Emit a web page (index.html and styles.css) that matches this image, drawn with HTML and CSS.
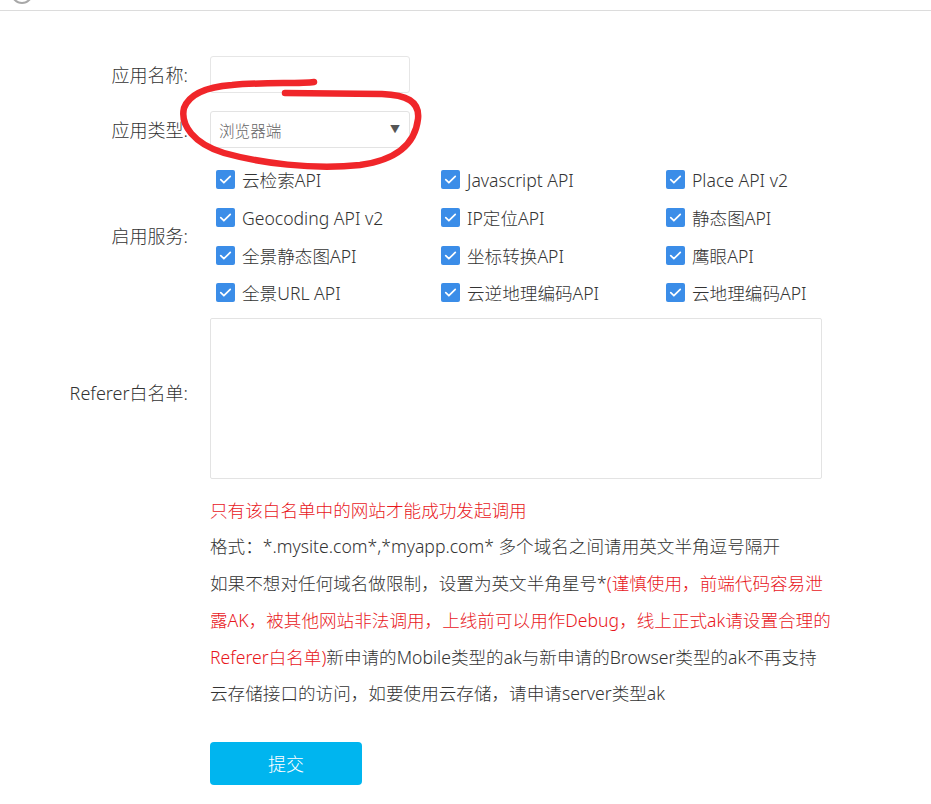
FILE: index.html
```html
<!DOCTYPE html>
<html lang="zh-CN">
<head>
<meta charset="utf-8">
<title>创建应用</title>
<link rel="stylesheet" href="styles.css">
</head>
<body>
<div class="topbar"><span class="logo-circle"></span></div>
<form class="app-form">
  <div class="row row-name">
    <label class="label">应用名称:</label>
    <div class="control"><input class="text-input" type="text"></div>
  </div>
  <div class="row row-type">
    <label class="label">应用类型:</label>
    <div class="control">
      <div class="select"><span>浏览器端</span><span class="arrow">▼</span></div>
    </div>
  </div>
  <div class="row row-services">
    <label class="label">启用服务:</label>
    <div class="control services">
      <div class="cb"><span class="box"><svg viewBox="0 0 20 20"><path d="M5 10.2l3.3 3.2L15 6.8"/></svg></span>云检索API</div>
      <div class="cb"><span class="box"><svg viewBox="0 0 20 20"><path d="M5 10.2l3.3 3.2L15 6.8"/></svg></span>Javascript API</div>
      <div class="cb"><span class="box"><svg viewBox="0 0 20 20"><path d="M5 10.2l3.3 3.2L15 6.8"/></svg></span>Place API v2</div>
      <div class="cb"><span class="box"><svg viewBox="0 0 20 20"><path d="M5 10.2l3.3 3.2L15 6.8"/></svg></span>Geocoding API v2</div>
      <div class="cb"><span class="box"><svg viewBox="0 0 20 20"><path d="M5 10.2l3.3 3.2L15 6.8"/></svg></span>IP定位API</div>
      <div class="cb"><span class="box"><svg viewBox="0 0 20 20"><path d="M5 10.2l3.3 3.2L15 6.8"/></svg></span>静态图API</div>
      <div class="cb"><span class="box"><svg viewBox="0 0 20 20"><path d="M5 10.2l3.3 3.2L15 6.8"/></svg></span>全景静态图API</div>
      <div class="cb"><span class="box"><svg viewBox="0 0 20 20"><path d="M5 10.2l3.3 3.2L15 6.8"/></svg></span>坐标转换API</div>
      <div class="cb"><span class="box"><svg viewBox="0 0 20 20"><path d="M5 10.2l3.3 3.2L15 6.8"/></svg></span>鹰眼API</div>
      <div class="cb"><span class="box"><svg viewBox="0 0 20 20"><path d="M5 10.2l3.3 3.2L15 6.8"/></svg></span>全景URL API</div>
      <div class="cb"><span class="box"><svg viewBox="0 0 20 20"><path d="M5 10.2l3.3 3.2L15 6.8"/></svg></span>云逆地理编码API</div>
      <div class="cb"><span class="box"><svg viewBox="0 0 20 20"><path d="M5 10.2l3.3 3.2L15 6.8"/></svg></span>云地理编码API</div>
    </div>
  </div>
  <div class="row row-referer">
    <label class="label">Referer白名单:</label>
    <div class="control"><textarea class="textarea"></textarea></div>
  </div>
  <div class="row row-help">
    <div></div>
    <div class="help">
      <div class="red">只有该白名单中的网站才能成功发起调用</div>
      <div>格式：*.mysite.com*,*myapp.com* 多个域名之间请用英文半角逗号隔开</div>
      <div>如果不想对任何域名做限制，设置为英文半角星号*<span class="red">(谨慎使用，前端代码容易泄<br>露AK，被其他网站非法调用，上线前可以用作Debug，线上正式ak请设置合理的<br>Referer白名单)</span>新申请的Mobile类型的ak与新申请的Browser类型的ak不再支持<br>云存储接口的访问，如要使用云存储，请申请server类型ak</div>
    </div>
  </div>
  <div class="row row-submit">
    <div></div>
    <div><button type="button" class="submit">提交</button></div>
  </div>
</form>
<svg class="scribble" width="931" height="804" viewBox="0 0 931 804">
  <path d="M314 82 C300 84 262 82 232 85 C206 87 189 95 184 108 C180 125 194 144 224 153 C260 163 312 170 360 165 C396 160 415 145 418 119 C420 101 406 95 382 94 L285 93"/>
</svg>
</body>
</html>
```
FILE: styles.css
```css
* { box-sizing: border-box; }
html, body { margin: 0; padding: 0; background: #fff; }
body {
  font-family: "Noto Sans", "Noto Sans CJK SC", sans-serif;
  font-weight: 300;
  color: #333;
  font-size: 17.6px;
  position: relative;
}
.topbar {
  height: 11px;
  border-bottom: 1px solid #dcdcdc;
  overflow: hidden;
  padding-left: 11px;
}
.logo-circle {
  display: block;
  width: 22px;
  height: 22px;
  margin-top: -18px;
  border: 2px solid #a8a8a8;
  border-radius: 50%;
}
.app-form { display: block; }
.row {
  display: grid;
  grid-template-columns: 188px 1fr;
  column-gap: 22px;
  align-items: center;
}
.label {
  text-align: right;
  white-space: nowrap;
  line-height: 24px;
  font-size: 18px;
}
.row-name { margin-top: 45px; }
.row-type { margin-top: 18px; }
.row-services { margin-top: 13px; }
.row-referer { margin-top: 6px; }
.row-referer .label { margin-top: -10px; }
.row-help { margin-top: 13px; }
.row-submit { margin-top: 30px; }
.text-input {
  display: block;
  width: 200px;
  height: 37px;
  border: 1px solid #e6e6e6;
  border-radius: 3px;
  outline: none;
  margin: 0;
}
.select {
  width: 200px;
  height: 37px;
  border: 1px solid #e3e3e3;
  border-radius: 3px;
  display: flex;
  align-items: center;
  justify-content: space-between;
  padding: 0 9px 0 8px;
  font-family: "Noto Sans CJK SC", sans-serif;
  font-size: 15.6px;
  color: #666;
}
.select .arrow {
  font-size: 10px;
  color: #555;
  margin-top: -2px;
}
.services {
  display: grid;
  grid-template-columns: repeat(3, 225px);
  grid-auto-rows: 37.7px;
  padding-left: 6px;
}
.cb {
  display: flex;
  align-items: center;
  white-space: nowrap;
  color: #333;
}
.box {
  flex: none;
  width: 19px;
  height: 19px;
  border-radius: 2px;
  background: #3b8de8;
  margin-right: 7px;
  display: flex;
}
.box svg { width: 19px; height: 19px; }
.box path {
  fill: none;
  stroke: #fff;
  stroke-width: 1.8;
  stroke-linecap: round;
  stroke-linejoin: round;
}
.textarea {
  display: block;
  width: 612px;
  height: 161px;
  border: 1px solid #e3e3e3;
  border-radius: 2px;
  resize: none;
  margin: 0;
  outline: none;
}
.help {
  line-height: 36.7px;
  white-space: nowrap;
  color: #333;
}
.red { color: #e8171c; }
.submit {
  display: block;
  width: 152px;
  height: 43px;
  border: none;
  border-radius: 4px;
  background: #00b5ef;
  color: #fff;
  font-family: "Noto Sans CJK SC", sans-serif;
  font-weight: 300;
  font-size: 18px;
  padding: 0;
}
.scribble {
  position: absolute;
  left: 0;
  top: 0;
  pointer-events: none;
}
.scribble path {
  fill: none;
  stroke: #f0262a;
  stroke-width: 6.5;
  stroke-linecap: round;
  stroke-linejoin: round;
}
```
